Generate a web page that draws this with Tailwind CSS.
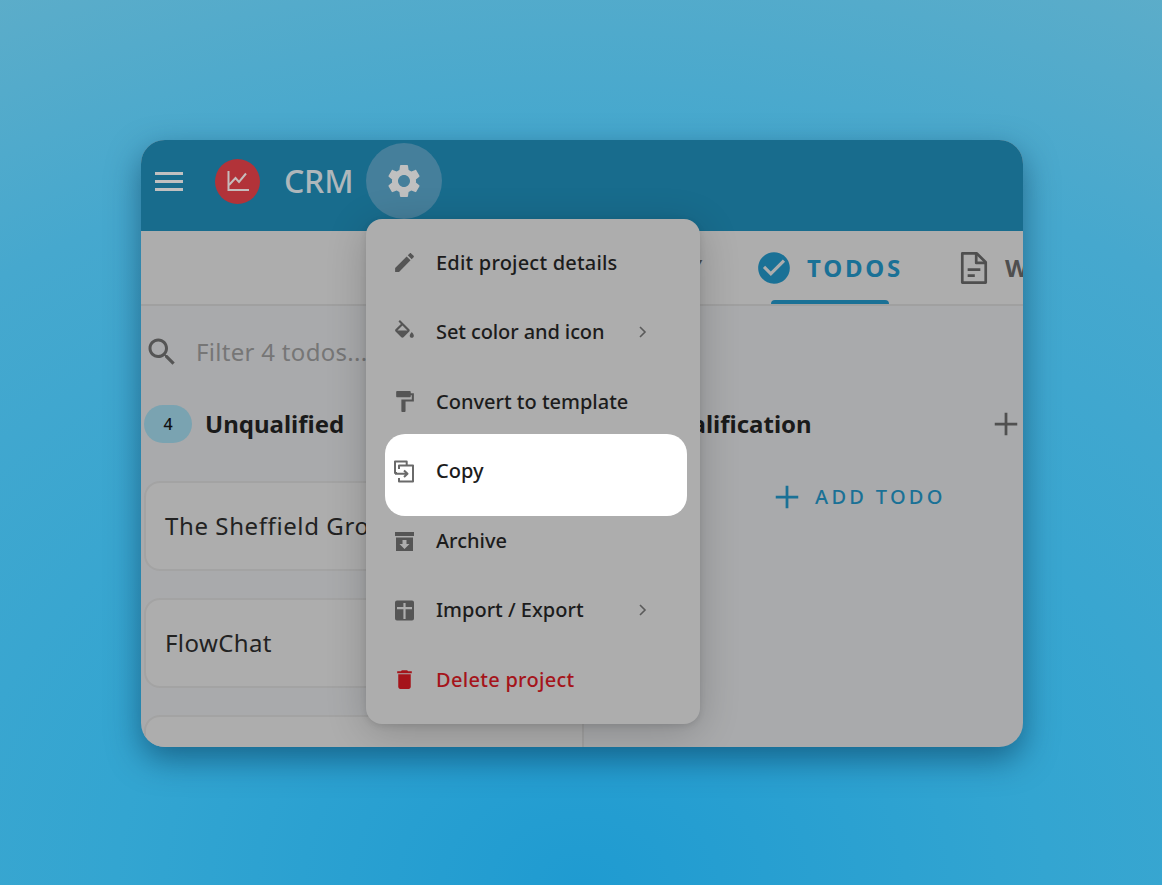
<!doctype html>
<html><head><meta charset="utf-8">
<script src="https://cdn.jsdelivr.net/npm/@tailwindcss/browser@4"></script>
</head>
<body class="m-0">
<div class="w-[1162px] h-[885px] overflow-hidden pt-[140px] pl-[141px] bg-[radial-gradient(ellipse_100%_100%_at_50%_100%,#1f9bd1_0%,#33a5d1_40%,#46a8ce_85%,#62aec8_120%)] font-['Noto_Sans',sans-serif]">
  <div class="relative w-[882px] h-[607px] rounded-[24px] overflow-hidden bg-[#a9aaac] shadow-[0_12px_32px_rgba(0,40,70,0.5)] flex flex-col">
    <header class="h-[91px] shrink-0 bg-[#186c8d] flex items-start pt-[3px] pl-[14px]">
      <div class="h-[76px] flex items-center">
        <div class="w-[28px] flex flex-col gap-[5px]">
          <div class="h-[3px] bg-[#c0c0c0]"></div><div class="h-[3px] bg-[#c0c0c0]"></div><div class="h-[3px] bg-[#c0c0c0]"></div>
        </div>
        <div class="ml-[32px] w-[45px] h-[45px] rounded-full bg-[#b23339] flex items-center justify-center">
          <svg class="w-[24px] h-[24px]" viewBox="0 0 24 24" fill="none" stroke="#c6bcbc" stroke-width="2"><path d="M2.5 2V21H23"/><path d="M3 16l6.5-7 3.5 4 7-8.5"/></svg>
        </div>
        <div class="ml-[24px] w-[82px] text-[32px] leading-none font-medium tracking-[-0.2px] text-[#aeb7bb]">CRM</div>
        <div class="w-[76px] h-[76px] rounded-full bg-[#457f9b] flex items-center justify-center">
          <svg class="w-[40px] h-[40px]" viewBox="0 0 24 24" fill="#c0c0c0"><path d="M19.14,12.94c0.04-0.3,0.06-0.61,0.06-0.94c0-0.32-0.02-0.64-0.07-0.94l2.03-1.58c0.18-0.14,0.23-0.41,0.12-0.61 l-1.92-3.32c-0.12-0.22-0.37-0.29-0.59-0.22l-2.39,0.96c-0.5-0.38-1.03-0.7-1.62-0.94L14.4,2.81c-0.04-0.24-0.24-0.41-0.48-0.41 h-3.84c-0.24,0-0.43,0.17-0.47,0.41L9.25,5.35C8.66,5.59,8.12,5.92,7.63,6.29L5.24,5.33c-0.22-0.08-0.47,0-0.59,0.22L2.74,8.87 C2.62,9.08,2.66,9.34,2.86,9.48l2.03,1.58C4.84,11.36,4.8,11.69,4.8,12s0.02,0.64,0.07,0.94l-2.03,1.58 c-0.18,0.14-0.23,0.41-0.12,0.61l1.92,3.32c0.12,0.22,0.37,0.29,0.59,0.22l2.39-0.96c0.5,0.38,1.03,0.7,1.62,0.94l0.36,2.54 c0.05,0.24,0.24,0.41,0.48,0.41h3.84c0.24,0,0.44-0.17,0.47-0.41l0.36-2.54c0.59-0.24,1.13-0.56,1.62-0.94l2.39,0.96 c0.22,0.08,0.47,0,0.59-0.22l1.92-3.32c0.12-0.22,0.07-0.47-0.12-0.61L19.14,12.94z M12,15.6c-1.98,0-3.6-1.62-3.6-3.6 s1.62-3.6,3.6-3.6s3.6,1.62,3.6,3.6S13.98,15.6,12,15.6z"/></svg>
        </div>
      </div>
    </header>

    <nav class="h-[75px] shrink-0 bg-[#adadad] border-b-2 border-[#a0a0a0] flex items-start whitespace-nowrap">
      <div class="w-[564px] mr-[53px] shrink-0 mt-[20px] text-right text-[24px] leading-[34px] font-bold tracking-[2.8px] text-[#4f4f4f]">ACTIVITY</div>
      <div class="relative w-[118px] h-[73px] mr-[79px] shrink-0">
        <svg class="absolute left-[-3px] top-[18px] w-[38px] h-[38px]" viewBox="0 0 24 24" fill="#1a7196"><path d="M12 2C6.48 2 2 6.48 2 12s4.48 10 10 10 10-4.48 10-10S17.52 2 12 2zm-2 15-5-5 1.41-1.41L10 14.17l7.59-7.59L19 8l-9 9z"/></svg>
        <span class="absolute left-[49px] top-[20px] text-[24px] leading-[34px] font-bold tracking-[2.8px] text-[#1a7196]">TODOS</span>
        <div class="absolute left-[13px] right-[-13px] bottom-0 h-[4px] rounded-t-[4px] bg-[#1a7196]"></div>
      </div>
      <svg class="mt-[18px] w-[38px] h-[38px] shrink-0" viewBox="0 0 24 24" fill="none" stroke="#4f4f4f" stroke-width="1.7" stroke-linejoin="round"><path d="M4.6 2.8h9.2l5.6 5.6v12.8H4.6z"/><path d="M13.4 2.8V8.8h6"/><path d="M8 13h8M8 16.8h4.5"/></svg>
      <span class="ml-[12px] mt-[20px] text-[24px] leading-[34px] font-bold text-[#4f4f4f]">W</span>
    </nav>

    <main class="flex-1 flex min-h-0">
      <section class="w-[443px] shrink-0 border-r-2 border-[#a0a0a0] pl-[3px] overflow-hidden">
        <div class="mt-[26px] h-[40px] flex items-center gap-[16px]">
          <svg class="w-[36px] h-[36px] shrink-0" viewBox="0 0 24 24" fill="#555555"><path d="M15.5 14h-.79l-.28-.27C15.41 12.59 16 11.11 16 9.5 16 5.91 13.09 3 9.5 3S3 5.91 3 9.5 5.91 16 9.5 16c1.61 0 3.09-.59 4.23-1.57l.27.28v.79l5 4.99L20.49 19l-4.99-5zm-6 0C7.01 14 5 11.99 5 9.5S7.01 5 9.5 5 14 7.01 14 9.5 11.99 14 9.5 14z"/></svg>
          <span class="text-[24px] leading-none tracking-[0.3px] text-[#767676] whitespace-nowrap">Filter 4 todos...</span>
        </div>
        <div class="mt-[33px] flex items-center gap-[13px]">
          <div class="w-[48px] h-[38px] rounded-full bg-[#7aa3b1] flex items-center justify-center text-[16px] font-medium text-[#111]">4</div>
          <span class="text-[24px] leading-none font-bold text-[#1a1a1a]">Unqualified</span>
        </div>
        <div class="mt-[38px] w-[700px] flex flex-col gap-[27px]">
          <div class="h-[90px] rounded-[16px] border-2 border-[#a3a3a3] bg-[#adadad] flex items-center pl-[19px] text-[24px] tracking-[0.6px] text-[#222] whitespace-nowrap">The Sheffield Group</div>
          <div class="h-[90px] rounded-[16px] border-2 border-[#a3a3a3] bg-[#adadad] flex items-center pl-[19px] text-[24px] tracking-[0.4px] text-[#222]">FlowChat</div>
          <div class="h-[90px] rounded-[16px] border-2 border-[#a3a3a3] bg-[#adadad]"></div>
        </div>
      </section>
      <section class="flex-1 min-w-0">
        <div class="mt-[98px] h-[40px] pr-[2px] flex items-center justify-between">
          <span class="text-[24px] font-bold text-[#1a1a1a] pl-[73px] whitespace-nowrap">Qualification</span>
          <svg class="w-[30px] h-[30px]" viewBox="0 0 24 24" fill="none" stroke="#505050" stroke-width="2.2"><path d="M12 3v18M3 12h18"/></svg>
        </div>
        <div class="mt-[38px] pl-[187.5px] flex items-center gap-[13.5px] text-[#1a7196]">
          <svg class="w-[30px] h-[30px] shrink-0" viewBox="0 0 24 24" fill="none" stroke="currentColor" stroke-width="2.2"><path d="M12 3v18M3 12h18"/></svg>
          <span class="text-[20px] leading-none font-medium tracking-[3.3px] whitespace-nowrap">ADD TODO</span>
        </div>
      </section>
    </main>

    <div class="absolute left-[225px] top-[79px] w-[334px] h-[505px] rounded-[16px] bg-[#adadad] shadow-[0_8px_40px_rgba(0,0,0,0.2),0_2px_6px_rgba(0,0,0,0.1)] flex flex-col pl-[19px] pr-[13px] pt-[8.75px] text-[20px] font-medium text-[#1c1c1c]">
      <div class="h-[69.5px] shrink-0 flex items-center pl-[7px] gap-[20px]">
        <svg class="w-[25px] h-[25px] -mx-[0.5px] shrink-0" viewBox="0 0 24 24" fill="#555"><path d="M3 17.25V21h3.75L17.81 9.94l-3.75-3.75L3 17.25zM20.71 7.04c.39-.39.39-1.02 0-1.41l-2.34-2.34c-.39-.39-1.02-.39-1.41 0l-1.83 1.83 3.75 3.75 1.83-1.83z"/></svg>
        <span class="tracking-[0.2px]">Edit project details</span>
      </div>
      <div class="h-[69.5px] shrink-0 flex items-center pl-[7px] gap-[20px]">
        <svg class="w-[25px] h-[25px] -mx-[0.5px] shrink-0" viewBox="0 0 24 24" fill="#555"><path d="M16.56 8.94 7.62 0 6.21 1.41l2.38 2.38-5.15 5.15c-.59.59-.59 1.54 0 2.12l5.5 5.5c.29.29.68.44 1.06.44s.77-.15 1.06-.44l5.5-5.5c.59-.58.59-1.53 0-2.12zM5.21 10 10 5.21 14.79 10H5.21zM19 11.5s-2 2.17-2 3.5c0 1.1.9 2 2 2s2-.9 2-2c0-1.33-2-3.5-2-3.5z"/></svg>
        <span class="w-[182px] tracking-[-0.1px] whitespace-nowrap">Set color and icon</span>
        <svg class="w-[10px] h-[14px]" viewBox="0 0 10 14" fill="none" stroke="#5a5a5a" stroke-width="1.6"><path d="M2 2 7 7 2 12"/></svg>
      </div>
      <div class="h-[69.5px] shrink-0 flex items-center pl-[7px] gap-[20px]">
        <svg class="w-[25px] h-[25px] -mx-[0.5px] shrink-0" viewBox="0 0 24 24" fill="#555"><path d="M18 4V3c0-.55-.45-1-1-1H5c-.55 0-1 .45-1 1v4c0 .55.45 1 1 1h12c.55 0 1-.45 1-1V6h1v4H9v11c0 .55.45 1 1 1h2c.55 0 1-.45 1-1v-9h8V4h-3z"/></svg>
        <span>Convert to template</span>
      </div>
      <div class="h-[82px] shrink-0 -mt-[2.25px] -mb-[10.25px] relative flex items-center pl-[7px] pb-[8px] gap-[20px] bg-white rounded-[20px]">
        <svg class="w-[24px] h-[24px] shrink-0" viewBox="0 0 24 24" fill="none" stroke="#6a6a6a" stroke-width="2" stroke-linejoin="round"><path d="M14.7 6V2.5H3V14H5"/><path d="M7 10V6.5H21V22.5H7V19"/><path d="M3 14.8H15M12 11.5l3.5 3.3-3.5 3.3"/></svg>
        <span>Copy</span>
      </div>
      <div class="h-[69.5px] shrink-0 flex items-center pl-[7px] gap-[20px]">
        <svg class="w-[24px] h-[24px] shrink-0" viewBox="0 0 24 24" fill="#555"><path d="M3 3h19v4H3z"/><path fill-rule="evenodd" d="M4 8.5h17V22H4zM10.5 11v4H7.5l5 5 5-5h-3v-4z"/></svg>
        <span>Archive</span>
      </div>
      <div class="h-[69.5px] shrink-0 flex items-center pl-[7px] gap-[20px]">
        <svg class="w-[24px] h-[24px] shrink-0" viewBox="0 0 24 24" fill="#555"><path fill-rule="evenodd" d="M5 2.5h15a2 2 0 0 1 2 2v16a2 2 0 0 1-2 2H5a2 2 0 0 1-2-2v-16a2 2 0 0 1 2-2zM5 9v2.2h6.4V21h2.2V11.2H20V9h-6.4V5h-2.2v4z"/></svg>
        <span class="w-[182px] whitespace-nowrap">Import / Export</span>
        <svg class="w-[10px] h-[14px]" viewBox="0 0 10 14" fill="none" stroke="#5a5a5a" stroke-width="1.6"><path d="M2 2 7 7 2 12"/></svg>
      </div>
      <div class="h-[69.5px] shrink-0 flex items-center pl-[7px] gap-[20px] text-[#a5141a]">
        <svg class="w-[25px] h-[25px] -mx-[0.5px] shrink-0" viewBox="0 0 24 24" fill="#a5141a"><path d="M6 19c0 1.1.9 2 2 2h8c1.1 0 2-.9 2-2V7H6v12zM19 4h-3.5l-1-1h-5l-1 1H5v2h14V4z"/></svg>
        <span class="tracking-[0.3px]">Delete project</span>
      </div>
    </div>
  </div>
</div>
</body></html>
